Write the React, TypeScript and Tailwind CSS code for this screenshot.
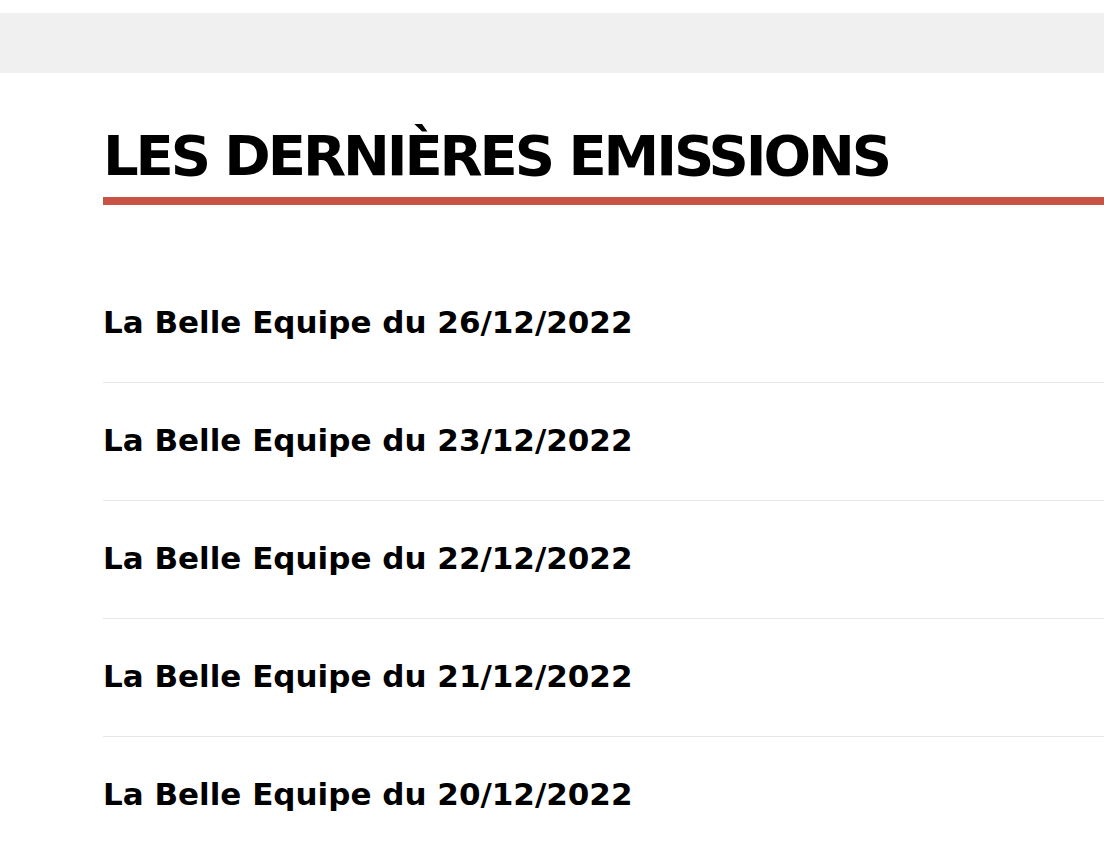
const EMISSIONS = [
  "La Belle Equipe du 26/12/2022",
  "La Belle Equipe du 23/12/2022",
  "La Belle Equipe du 22/12/2022",
  "La Belle Equipe du 21/12/2022",
  "La Belle Equipe du 20/12/2022",
];

export default function App() {
  return (
    <div className="min-h-screen bg-white font-['Futura','DejaVu_Sans',sans-serif] text-black">
      <div className="h-[13px]" />
      <div className="h-[60px] bg-[#f0f0f0]" />

      <section className="pl-[103px]">
        <h2 className="mt-[51px] text-[56px] leading-[64px] font-bold uppercase tracking-[-3.1px]">
          Les dernières emissions
        </h2>
        <div className="mt-[9px] h-[8px] bg-[#c85243]" />

        <ul className="mt-[60px]">
          {EMISSIONS.map((title) => (
            <li
              key={title}
              className="flex h-[118px] items-center border-b border-[#e6e6e6] pb-[2px]"
            >
              <span className="text-[31px] leading-none font-bold">{title}</span>
            </li>
          ))}
        </ul>
      </section>
    </div>
  );
}
